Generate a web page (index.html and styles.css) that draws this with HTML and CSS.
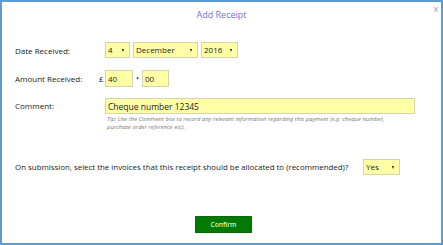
FILE: index.html
```html
<!DOCTYPE html>
<html lang="en">
<head>
    <meta charset="UTF-8">
    <title>Add Receipt</title>
    <link rel="stylesheet" href="styles.css">
</head>
<body>

<div class="dialog">
    <div class="dialog-header">
        <span class="dialog-title">Add Receipt</span>
        <a class="dialog-close" href="#">X</a>
    </div>

    <form class="receipt-form">
        <!-- Date -->
        <div class="form-row row-date">
            <label class="form-label">Date Received:</label>
            <div class="select-box day">
                <select><option>4</option></select>
                <span class="caret"></span>
            </div>
            <div class="select-box month">
                <select><option>December</option></select>
                <span class="caret"></span>
            </div>
            <div class="select-box year">
                <select><option>2016</option></select>
                <span class="caret"></span>
            </div>
        </div>

        <!-- Amount -->
        <div class="form-row row-amount">
            <label class="form-label">Amount Received:</label>
            <span class="currency">£</span>
            <input class="text-input pounds" type="text" value="40">
            <span class="decimal">•</span>
            <input class="text-input pence" type="text" value="00">
        </div>

        <!-- Comment -->
        <div class="form-row row-comment">
            <label class="form-label">Comment:</label>
            <div class="comment-field">
                <input class="text-input comment" type="text" value="Cheque number 12345">
                <div class="tip">Tip: Use the Comment box to record any relevant information regarding this payment (e.g. cheque number, purchase order reference etc).</div>
            </div>
        </div>

        <!-- Allocate -->
        <div class="form-row row-allocate">
            <label class="question">On submission, select the invoices that this receipt should be allocated to (recommended)?</label>
            <div class="select-box yesno">
                <select><option>Yes</option></select>
                <span class="caret"></span>
            </div>
        </div>

        <div class="actions">
            <button type="submit" class="confirm-button">Confirm</button>
        </div>
    </form>
</div>

</body>
</html>
```

FILE: styles.css
```css
body {
    margin: 0;
    font-family: "Open Sans", Arial, sans-serif;
    color: #222;
    background: #fff;
}
.dialog {
    position: relative;
    width: 443px;
    height: 245px;
    box-sizing: border-box;
    border: 2px solid #5b9bd5;
}
.dialog-header {
    height: 20px;
    line-height: 20px;
    text-align: center;
}
.dialog-title {
    font-size: 9px;
    color: #7373de;
}
.dialog-close {
    position: absolute;
    top: 1px;
    right: 3px;
    font-size: 8px;
    line-height: 12px;
    color: #8585ee;
    text-decoration: none;
}
.receipt-form {
    padding-left: 13px;
}
.form-row {
    display: flex;
    align-items: center;
}
.form-label {
    width: 90px;
    font-size: 8px;
    color: #222;
}
.row-date {
    margin-top: 20px;
    height: 16px;
}
.row-amount {
    margin-top: 12px;
    height: 17px;
}
.row-comment {
    margin-top: 11px;
    align-items: flex-start;
}
.row-comment .form-label {
    line-height: 16px;
}
.row-allocate {
    margin-top: 28px;
    height: 16px;
}
.select-box {
    position: relative;
    height: 16px;
    box-sizing: border-box;
    border: 1px solid #d4d4b0;
    background: #ffffa6;
    margin-right: 3px;
}
.select-box select {
    display: block;
    appearance: none;
    -webkit-appearance: none;
    border: 0;
    background: transparent;
    font-family: "Open Sans", Arial, sans-serif;
    font-size: 8px;
    line-height: 14px;
    color: #222;
    height: 14px;
    padding: 0 0 0 2px;
    margin: 0;
    width: 100%;
    outline: none;
}
.caret {
    position: absolute;
    top: 6px;
    right: 5px;
    width: 0;
    height: 0;
    border-left: 1.5px solid transparent;
    border-right: 1.5px solid transparent;
    border-top: 3px solid #111;
}
.select-box.day { width: 25px; }
.select-box.month { width: 65px; }
.select-box.year { width: 37px; }
.select-box.yesno { width: 37px; }
.currency {
    font-size: 8px;
    width: 6px;
    margin-left: -6px;
}
.decimal {
    font-size: 7px;
    width: 9px;
    text-align: center;
    color: #111;
}
.text-input {
    box-sizing: border-box;
    height: 17px;
    border: 1px solid #d4d4b0;
    background: #ffffa6;
    font-family: "Open Sans", Arial, sans-serif;
    font-size: 8px;
    color: #222;
    padding: 0 2px;
    margin: 0;
    outline: none;
}
.text-input.pounds { width: 28px; }
.text-input.pence { width: 27px; }
.comment-field {
    width: 310px;
}
.text-input.comment {
    display: block;
    width: 310px;
    height: 16px;
    font-size: 8.5px;
}
.tip {
    margin-top: 1px;
    font-size: 5.9px;
    line-height: 8px;
    font-style: italic;
    color: #777;
    padding-left: 2px;
    padding-right: 18px;
}
.question {
    width: 348px;
    font-size: 7.9px;
    color: #222;
}
.actions {
    margin-top: 35px;
    text-align: center;
    padding-right: 9px;
}
.confirm-button {
    width: 57px;
    height: 17px;
    border: 1px solid #0a6a0a;
    background: #037a03;
    color: #d8f5cc;
    font-family: "Open Sans", Arial, sans-serif;
    font-size: 6.6px;
    font-weight: 600;
    padding: 0;
}
```
